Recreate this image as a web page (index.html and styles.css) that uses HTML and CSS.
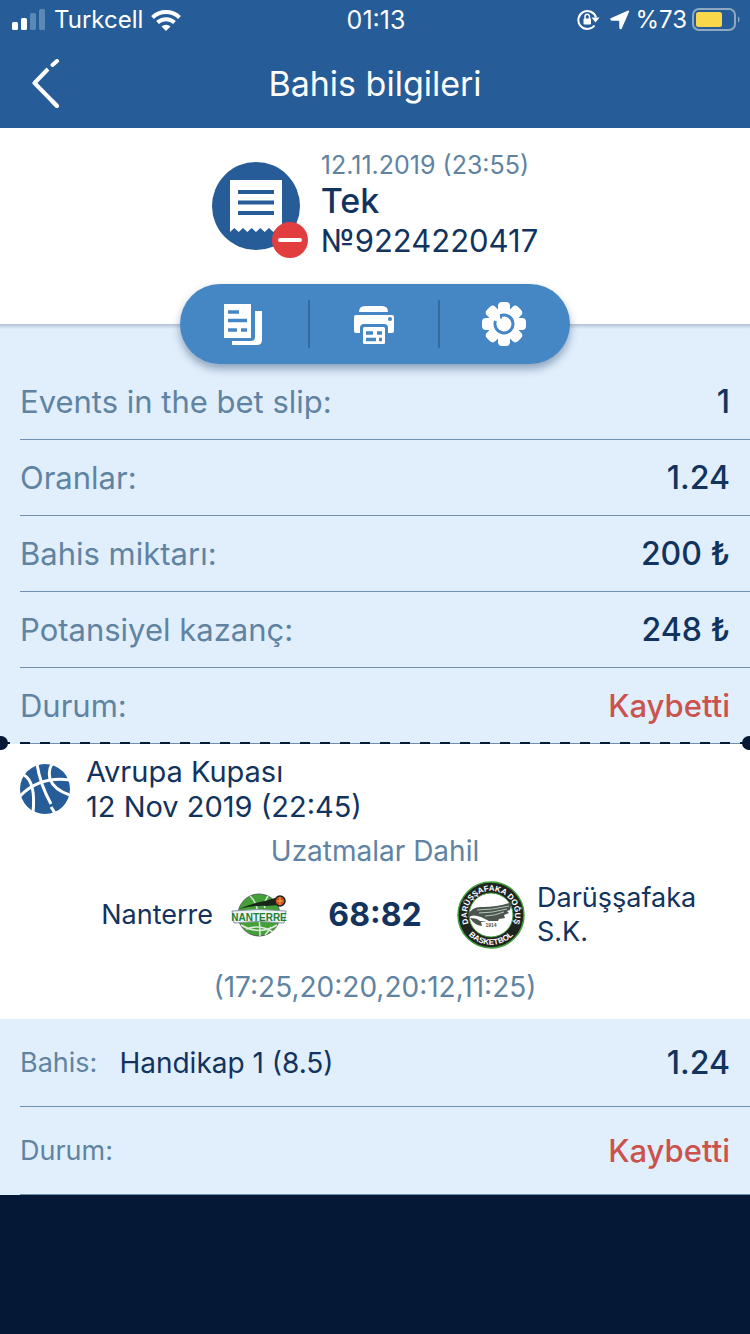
FILE: index.html
```
<!DOCTYPE html>
<html lang="tr">
<head>
    <meta charset="UTF-8">
    <meta name="viewport" content="width=device-width, initial-scale=1.0">
    <title>Bahis bilgileri</title>
    <link rel="stylesheet" href="styles.css">
</head>
<body>
    <header class="header">
        <div class="status">
            <div class="status-side">
                <svg width="34" height="22" viewBox="0 0 34 22" fill="#fff">
                    <rect x="0" y="13" width="6" height="8" rx="1.5"/>
                    <rect x="9" y="9" width="6" height="12" rx="1.5"/>
                    <rect x="18" y="4" width="6" height="17" rx="1.5" fill="#5b89b6"/>
                    <rect x="27" y="0" width="6" height="21" rx="1.5" fill="#5b89b6"/>
                </svg>
                <span>Turkcell</span>
                <svg width="30" height="22" viewBox="0 0 30 22" fill="none" stroke="#fff" stroke-width="4">
                    <path d="M1.5 8.5a19.5 19.5 0 0 1 27 0"/>
                    <path d="M6.5 13.5a12.5 12.5 0 0 1 17 0"/>
                    <path d="M15 22l-4.5-4.5a6.5 6.5 0 0 1 9 0z" fill="#fff" stroke="none"/>
                </svg>
            </div>
            <time>01:13</time>
            <div class="status-side end">
                <svg width="23" height="22" viewBox="0 0 23 22" fill="none" stroke="#fff" stroke-width="2">
                    <path d="M17.5 16.500a9 9 0 1 1 1.500-8"/>
                    <path d="M14.500 8.500h8l-4 5z" fill="#fff" stroke="none"/>
                    <rect x="6.500" y="9.500" width="7.500" height="6" rx="1" fill="#fff" stroke="none"/>
                    <path d="M8 10V7.500a2.200 2.200 0 0 1 4.500 0V10" stroke-width="1.500"/>
                </svg>
                <svg width="20" height="20" viewBox="0 0 20 20" fill="#fff">
                    <path d="M18.500 1.200L11 18.500L10 18V11L9 10H1.500L1 9z" stroke="#fff" stroke-width="1.500" stroke-linejoin="round"/>
                </svg>
                <span>%73</span>
                <svg width="48" height="24" viewBox="0 0 48 24" fill="none">
                    <rect x="1" y="1" width="42" height="21" rx="6" stroke="#8fa9c0" stroke-width="2"/>
                    <rect x="4" y="4" width="26" height="15" rx="2.5" fill="#f8d84a"/>
                    <path d="M46 8.500c2 1 2 5 0 6z" fill="#8fa9c0"/>
                </svg>
            </div>
        </div>
        <nav class="nav">
            <button class="back" aria-label="Geri">
                <svg width="28" height="50" viewBox="0 0 28 50" fill="none" stroke="#fff" stroke-width="4" stroke-linecap="round" stroke-linejoin="round">
                    <path d="M25 47L2.500 24L16 10" stroke-linecap="butt"/>
                    <path d="M25 47L20 42M20.500 6L25 2"/>
                </svg>
            </button>
            <h1>Bahis bilgileri</h1>
        </nav>
    </header>

    <main>
        <section class="summary">
            <svg width="97" height="97" viewBox="0 0 97 97">
                <circle cx="44" cy="44" r="44" fill="#265c97"/>
                <path d="M18 18h52v52l-4.300-4-4.400 4-4.300-4-4.300 4-4.400-4-4.300 4-4.300-4-4.400 4-4.300-4-4.300 4-4.400-4-4.300 4z" fill="#fff"/>
                <path d="M26 30h36M26 40.500h36M26 51h36" stroke="#265c97" stroke-width="4"/>
                <circle cx="78" cy="78" r="18" fill="#e23d3f"/>
                <path d="M68 78h20" stroke="#fff" stroke-width="4" stroke-linecap="round"/>
            </svg>
            <div class="summary-text">
                <time>12.11.2019 (23:55)</time>
                <h2>Tek</h2>
                <p>№9224220417</p>
            </div>
        </section>

        <section class="details">
            <div class="toolbar">
                <button aria-label="Kupon">
                    <svg width="44" height="44" viewBox="0 0 44 44">
                        <path d="M2 2h27v34H2z" fill="#fff"/>
                        <path d="M33 9h7v29q0 5-5 5H10v-4h19q4 0 4-4z" fill="#fff"/>
                        <path d="M6 10h11M6 18.500h19M6 28h9M19 28h6" stroke="#4586c4" stroke-width="3.5"/>
                    </svg>
                </button>
                <button aria-label="Yazdır">
                    <svg width="44" height="44" viewBox="0 0 44 44">
                        <path d="M7 10q0-6 6-6h17q6 0 6 6z" fill="#fff"/>
                        <path d="M4 13h36q2 0 2 2v14q0 2-2 2h-4v-5q0-4-4-4H12q-4 0-4 4v5H4q-2 0-2-2V15q0-2 2-2z" fill="#fff"/>
                        <circle cx="38" cy="17" r="2" fill="#4586c4"/>
                        <rect x="11" y="25" width="22" height="17" rx="1.5" fill="#fff"/>
                        <path d="M14 31h7M25 31h5M14 37.500h10M27 37.500h3" stroke="#4586c4" stroke-width="3.5"/>
                    </svg>
                </button>
                <button aria-label="Ayarlar">
                    <svg width="44" height="44" viewBox="0 0 44 44">
                        <g fill="#fff">
                            <rect x="16" y="0" width="12" height="44" rx="4"/>
                            <rect x="16" y="0" width="12" height="44" rx="4" transform="rotate(45 22 22)"/>
                            <rect x="16" y="0" width="12" height="44" rx="4" transform="rotate(90 22 22)"/>
                            <rect x="16" y="0" width="12" height="44" rx="4" transform="rotate(135 22 22)"/>
                            <circle cx="22" cy="22" r="16"/>
                        </g>
                        <path d="M19 13.500a9 9 0 1 1-5.500 5.500" fill="none" stroke="#4586c4" stroke-width="3"/>
                        <path d="M19 12v4.500" stroke="#4586c4" stroke-width="2"/>
                    </svg>
                </button>
            </div>
            <dl class="rows">
                <div class="row"><dt>Events in the bet slip:</dt><dd>1</dd></div>
                <div class="row"><dt>Oranlar:</dt><dd>1.24</dd></div>
                <div class="row"><dt>Bahis miktarı:</dt><dd>200 ₺</dd></div>
                <div class="row"><dt>Potansiyel kazanç:</dt><dd>248 ₺</dd></div>
                <div class="row"><dt>Durum:</dt><dd class="lost">Kaybetti</dd></div>
            </dl>
            <div class="tear"></div>
        </section>

        <section class="event">
            <div class="league">
                <svg width="50" height="50" viewBox="0 0 50 50">
                    <circle cx="25" cy="25" r="25" fill="#265c97"/>
                    <g fill="none" stroke="#fff" stroke-width="3">
                        <path d="M0 32Q20 12 50 16"/>
                        <path d="M17 0Q20 20 31 40M31 43l4 6"/>
                        <path d="M4 11Q16 18 13 49"/>
                        <path d="M32 0Q28 6 30 15Q34 26 50 31"/>
                    </g>
                </svg>
                <div>
                    <h3>Avrupa Kupası</h3>
                    <time>12 Nov 2019 (22:45)</time>
                </div>
            </div>
            <p class="note">Uzatmalar Dahil</p>
            <div class="match">
                <div class="team home">
                    <span>Nanterre</span>
                    <svg width="68" height="68" viewBox="0 0 68 68">
                        <circle cx="34" cy="34" r="21" fill="#43a036" stroke="#56615b"/>
                        <g fill="none" stroke="#dcebdc" stroke-width="1.500">
                            <path d="M25 15q10 8 10 40M16 44q18 11 36 0M43 15q-5 8-3 12M21 48q14-5 27 3M46 46q-3 5-6 8"/>
                        </g>
                        <path d="M14 28q14-6 26-8l10-3 3 7-11 1q-14-1-28 3z" fill="#18251b"/>
                        <circle cx="55" cy="20" r="5" fill="#d44c24" stroke="#18251b" stroke-width="1.5"/>
                        <path d="M52 20h6M55 16v8" stroke="#f2b23c"/>
                        <path d="M7 30q27-3 54 0l-2 12q-25-3-50 0z" fill="#eef3f6" stroke="#8798a5"/>
                        <text x="34" y="40" class="logo-home" text-anchor="middle">NANTERRE</text>
                    </svg>
                </div>
                <strong class="score">68:82</strong>
                <div class="team">
                    <svg width="68" height="68" viewBox="0 0 68 68">
                        <circle cx="34" cy="34" r="33" fill="#20241f" stroke="#43a03f" stroke-width="1.5"/>
                        <circle cx="34" cy="34" r="22" fill="#fff" stroke="#43a03f"/>
                        <path id="arc-top" d="M13.300 46a24 24 0 1 1 41.400 0" fill="none"/>
                        <path id="arc-bottom" d="M6 46a31 31 0 0 0 56 0" fill="none"/>
                        <text class="logo-away" text-anchor="middle"><textPath href="#arc-top" startOffset="50%">DARÜŞŞAFAKA DOĞUŞ</textPath></text>
                        <text class="logo-away" text-anchor="middle"><textPath href="#arc-bottom" startOffset="50%">BASKETBOL</textPath></text>
                        <path d="M11 34q4-9 15-8 14 0 29-5l-2 8-3 1 2 2-5 2 1 3-6 1-1 2-9 0-8-4q-8-3-12 0z" fill="#4b554d"/>
                        <path d="M20 29q15 0 32-4M22 32q13 0 28-4M28 35q9 0 19-4" fill="none" stroke="#b9c4b9"/>
                        <path d="M13 37q7 0 10 3h7l-6 1 1 4q-8-1-12-8z" fill="#4b554d"/>
                        <text x="34" y="46" class="logo-year" text-anchor="middle">1914</text>
                    </svg>
                    <span>Darüşşafaka S.K.</span>
                </div>
            </div>
            <p class="note">(17:25,20:20,20:12,11:25)</p>
        </section>

        <dl class="rows bet">
            <div class="row">
                <dt>Bahis:</dt>
                <dd class="pick">Handikap 1 (8.5)</dd>
                <dd>1.24</dd>
            </div>
            <div class="row"><dt>Durum:</dt><dd class="lost">Kaybetti</dd></div>
        </dl>
    </main>
</body>
</html>
```
FILE: styles.css
```
html, body {
    margin: 0;
    min-height: 100%;
}
body {
    background: #051936;
    color: #12335e;
    font-family: Inter, "Noto Sans", sans-serif;
    font-size: 28px;
    line-height: 34px;
}
h1, h2, h3, p, dl, dd {
    margin: 0;
    font-size: inherit;
    font-weight: 400;
}
svg {
    display: block;
    flex-shrink: 0;
}
button {
    padding: 0;
    border: 0;
    background: none;
    cursor: pointer;
}
.header {
    background: #265c97;
    color: #fff;
}
.status {
    display: grid;
    grid-template-columns: 1fr auto 1fr;
    align-items: center;
    height: 40px;
    padding: 0 10px 0 12px;
    font-size: 24px;
}
.status time {
    font-size: 25px;
}
.status-side {
    display: flex;
    align-items: center;
    gap: 8px;
}
.status-side.end {
    justify-content: flex-end;
    gap: 5px;
}
.status-side.end svg:first-child {
    margin-right: 5px;
}
.nav {
    display: grid;
    grid-template-columns: 60px 1fr 60px;
    align-items: center;
    height: 88px;
}
.nav h1 {
    font-size: 34px;
    text-align: center;
}
.back {
    padding-left: 32px;
}
.summary {
    display: flex;
    justify-content: center;
    gap: 12px;
    padding: 21px 20px 63px;
    background: #fff;
}
.summary > svg {
    margin-top: 13px;
}
.summary-text {
    font-size: 31px;
    line-height: 40px;
}
.summary-text time {
    display: block;
    font-size: 25px;
    line-height: 32px;
    color: #6083a2;
}
.summary-text h2 {
    font-size: 34px;
    font-weight: 500;
}
.bet {
    background: #e1effc;
}
.details {
    background: linear-gradient(#b4c3d4, #e1effc 5px);
}
.toolbar {
    position: relative;
    display: grid;
    grid-template-columns: 1fr 1fr 1fr;
    width: 390px;
    height: 80px;
    margin: 0 auto -40px;
    top: -40px;
    border-radius: 40px;
    background: #4586c4;
    box-shadow: 0 5px 8px rgba(16, 48, 92, .4);
}
.toolbar button {
    display: flex;
    justify-content: center;
    align-items: center;
    padding-right: 2px;
}
.toolbar button:not(:last-child) {
    background: linear-gradient(#35699f, #35699f) right center / 2px 48px no-repeat;
}
.row {
    display: flex;
    align-items: center;
    box-sizing: border-box;
    height: 76px;
    margin-left: 20px;
    padding: 1px 20px 0 0;
    border-bottom: 1px solid #6f91b1;
    font-size: 31px;
}
.row dt {
    color: #6083a2;
}
.row dd {
    margin-left: auto;
    font-size: 32px;
    font-weight: 500;
}
.row .lost {
    font-size: 31px;
    color: #cb534e;
}
.tear {
    position: relative;
    height: 2px;
    margin-top: -2px;
    background: repeating-linear-gradient(90deg, #051936 0 10px, transparent 10px 20px);
}
.tear::before, .tear::after {
    content: "";
    position: absolute;
    top: -6px;
    left: -6px;
    width: 14px;
    height: 14px;
    border-radius: 50%;
    background: #051936;
}
.tear::after {
    left: auto;
    right: -6px;
}
main {
    overflow-x: hidden;
}
.event {
    padding: 10px 20px 15px;
    background: #fff;
}
.league {
    display: flex;
    align-items: center;
    gap: 16px;
    font-size: 29px;
    line-height: 35px;
}
.league time {
    display: block;
}
.note {
    margin-top: 10px;
    text-align: center;
    color: #6083a2;
}
.match {
    display: grid;
    grid-template-columns: 1fr 164px 1fr;
    align-items: center;
    margin: 13px 0 21px;
}
.team {
    display: flex;
    align-items: center;
    gap: 12px;
    font-size: 27px;
}
.team.home {
    justify-content: flex-end;
}
.score {
    font-size: 32px;
    font-weight: 700;
    text-align: center;
}
.logo-home {
    font: 700 10px "Liberation Sans", sans-serif;
    fill: #248032;
}
.logo-away {
    font: 700 8px "Liberation Sans Narrow", "Liberation Sans", sans-serif;
    fill: #fff;
}
.logo-year {
    font: 700 5px "Liberation Sans", sans-serif;
    fill: #4b554d;
}
.bet .row {
    height: 88px;
}
.bet dt {
    font-size: 27px;
}
.bet .pick {
    margin-left: 22px;
    font-size: 28px;
    font-weight: 400;
}
```
